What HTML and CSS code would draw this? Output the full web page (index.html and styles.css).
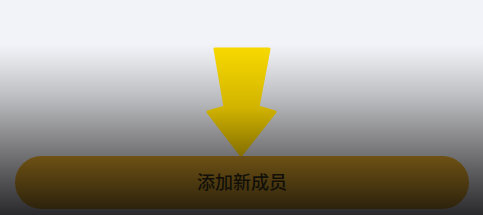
FILE: index.html
```html
<!DOCTYPE html>
<html lang="zh-CN">

<head>
    <meta charset="UTF-8">
    <meta name="viewport" content="width=device-width, initial-scale=1.0">
    <title>添加新成员</title>
    <link rel="stylesheet" href="styles.css">
</head>

<body>
    <div class="screen">
        <div class="topbar"></div>
        <div class="hint">
            <svg class="arrow" width="72" height="110" viewBox="0 0 72 110">
                <defs>
                    <linearGradient id="arrowfill" x1="0" y1="0" x2="0" y2="1">
                        <stop offset="0" stop-color="#f6d800" />
                        <stop offset="0.55" stop-color="#d2b400" />
                        <stop offset="1" stop-color="#857000" />
                    </linearGradient>
                </defs>
                <polygon points="9,3 63,3 52,61 69,66 35,109 2,66 19,61" fill="url(#arrowfill)"
                    stroke="url(#arrowfill)" stroke-width="3" stroke-linejoin="round" />
            </svg>
        </div>
        <div class="addbtn">添加新成员</div>
    </div>
</body>

</html>
```

FILE: styles.css
```css
body {
    margin: 0;
    font-family: "Noto Sans CJK SC", "Noto Sans", sans-serif;
}

.screen {
    width: 483px;
    height: 215px;
    display: flex;
    flex-direction: column;
    background: linear-gradient(to bottom, #f2f3f8 0px, #f2f3f8 44px, #e4e5e9 60px, #b9babd 100px, #8c8c8f 135px, #5f5f61 170px, #2a2a2c 215px);
}

.topbar {
    height: 46px;
}

.hint {
    display: flex;
    justify-content: center;
    height: 110px;
}

.arrow {
    display: block;
    margin-left: 1px;
}

.addbtn {
    margin: 0 14px 0 15px;
    height: 53px;
    border-radius: 27px;
    background: linear-gradient(to bottom, #6e5114, #4d3a10 50%, #2d220c);
    display: flex;
    align-items: center;
    justify-content: center;
    font-size: 18px;
    font-weight: 500;
    color: #121008;
    padding-bottom: 4px;
    box-sizing: border-box;
}
```
